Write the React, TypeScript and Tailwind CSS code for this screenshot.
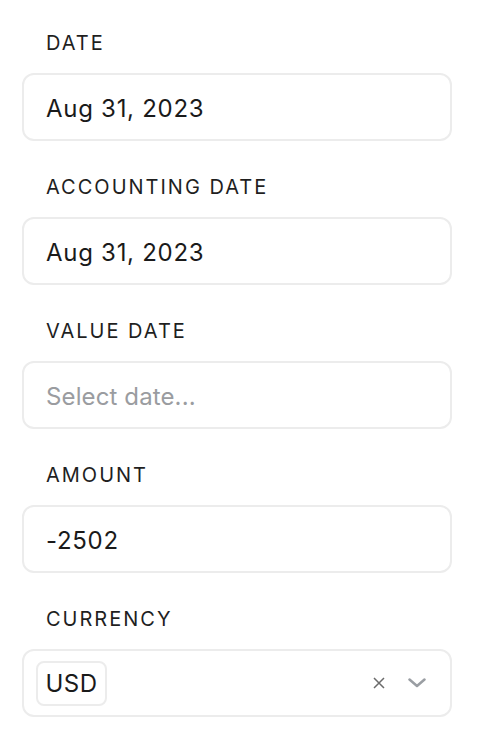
const fields = [
  { label: "DATE", value: "Aug 31, 2023" },
  { label: "ACCOUNTING DATE", value: "Aug 31, 2023" },
  { label: "VALUE DATE", value: "", placeholder: "Select date..." },
  { label: "AMOUNT", value: "-2502" },
];

function Label({ children }: { children: React.ReactNode }) {
  return (
    <div className="pl-6 h-7 leading-7 pt-px text-[20px] tracking-[0.1em] text-[#1f1f1f] mb-[17px]">
      {children}
    </div>
  );
}

export default function App() {
  return (
    <div
      className="w-[480px] h-[740px] bg-white pt-7 px-[22px] flex flex-col gap-[31px]"
      style={{ fontFamily: "Inter, 'Liberation Sans', sans-serif" }}
    >
      {fields.map((f) => (
        <div key={f.label}>
          <Label>{f.label}</Label>
          <div className="h-[68px] w-[430px] rounded-xl border-2 border-[#ececec] flex items-center pl-[22px] pr-6 pt-[3px] text-[24px]">
            {f.value ? (
              <span className="text-[#1a1a1a] tracking-[0.03em]">{f.value}</span>
            ) : (
              <span className="text-[#9a9ca0] tracking-[0.005em]">{f.placeholder}</span>
            )}
          </div>
        </div>
      ))}
      <div>
        <Label>CURRENCY</Label>
        <div className="h-[68px] w-[430px] rounded-xl border-2 border-[#ececec] flex items-center pl-3 pr-6 text-[24px]">
          <span className="h-[45px] w-[71px] pt-[2px] rounded-lg border-2 border-[#ececec] flex items-center justify-center tracking-[0.02em] text-[#1a1a1a]">
            USD
          </span>
          <div className="ml-auto flex items-center gap-[23px]">
            <svg width="12" height="12" viewBox="0 0 12 12" fill="none" stroke="#6b6b6b" strokeWidth="1.5">
              <path d="M1 1l10 10M11 1L1 11" />
            </svg>
            <svg width="18" height="10" viewBox="0 0 18 10" fill="none" stroke="#9a9ea3" strokeWidth="2.5" strokeLinecap="round" strokeLinejoin="round">
              <path d="M1.5 1.5L9 8l7.5-6.5" />
            </svg>
          </div>
        </div>
      </div>
    </div>
  );
}
